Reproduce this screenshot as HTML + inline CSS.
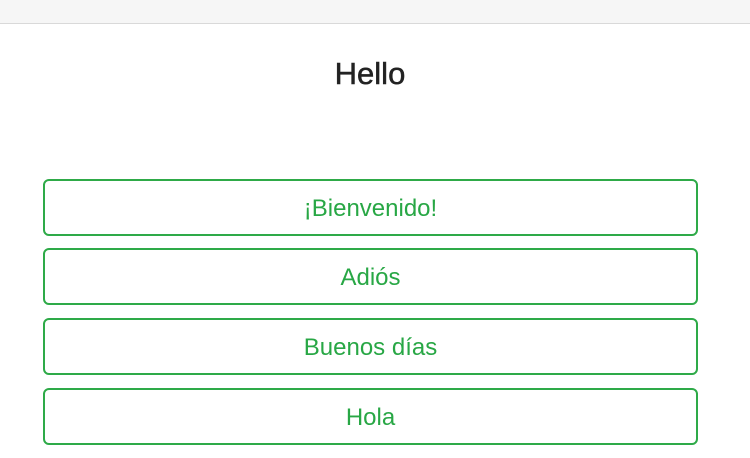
<!DOCTYPE html>
<html><head><style>
body{margin:0;width:750px;height:458px;background:#fff;font-family:"Liberation Sans",sans-serif;overflow:hidden;position:relative}
.bar{position:absolute;left:0;top:0;width:750px;height:23px;background:#f6f6f6;border-bottom:1px solid #d9d9d9}
h1{position:absolute;top:57px;left:-5px;width:750px;margin:0;text-align:center;font-size:31px;font-weight:normal;color:#222;line-height:34px;-webkit-text-stroke:0.5px #222}
.b{position:absolute;left:43px;width:655px;height:57px;border:2px solid #2eaa48;border-radius:6px;color:#28a745;font-size:24px;text-align:center;line-height:55px;box-sizing:border-box}
</style></head><body>
<div class="bar"></div>
<h1>Hello</h1>
<div class="b" style="top:179px">¡Bienvenido!</div>
<div class="b" style="top:248px">Adiós</div>
<div class="b" style="top:318px">Buenos días</div>
<div class="b" style="top:388px">Hola</div>
</body></html>
